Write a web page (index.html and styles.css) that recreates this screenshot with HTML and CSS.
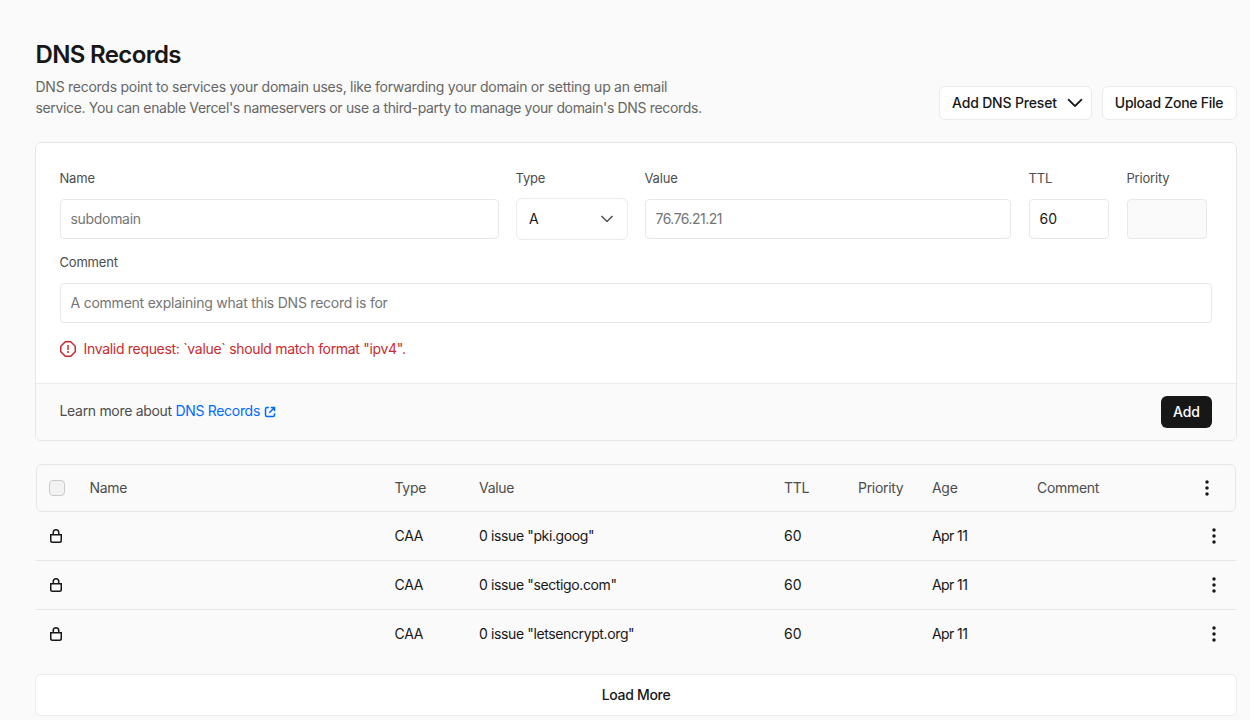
FILE: index.html
```
<!doctype html>
<html lang="en">

<head>
<meta charset="utf-8" />
<meta name="viewport" content="width=device-width, initial-scale=1" />
<title>DNS Records</title>
<link rel="stylesheet" href="styles.css">
</head>

<body>

<svg class="sprite" aria-hidden="true">
	<symbol id="chevron" viewBox="0 0 16 16">
		<path fill="currentColor" d="M14.06 5.5l-.53.53-4.82 4.82a1 1 0 0 1-1.42 0L2.47 6.03l-.53-.53L3 4.44l.53.53L8 9.44l4.47-4.47.53-.53z" />
	</symbol>
	<symbol id="lock" viewBox="0 0 16 16">
		<path fill="currentColor" fill-rule="evenodd" d="M10 6V4.5a2 2 0 0 0-4 0V6zM4.5 6V4.5a3.5 3.5 0 0 1 7 0V6H14v6.5a2.5 2.5 0 0 1-2.5 2.5h-7A2.5 2.5 0 0 1 2 12.5V6zm-1 1.5v5a1 1 0 0 0 1 1h7a1 1 0 0 0 1-1v-5z" />
	</symbol>
	<symbol id="dots" viewBox="0 0 16 16">
		<circle fill="currentColor" cx="8" cy="2" r="1.75" />
		<circle fill="currentColor" cx="8" cy="8" r="1.75" />
		<circle fill="currentColor" cx="8" cy="14" r="1.75" />
	</symbol>
</svg>

<main class="page">

<header class="head">
	<div>
		<h1>DNS Records</h1>
		<p class="intro"><span class="line">DNS records point to services your domain uses, like forwarding your domain or setting up an email</span> <span class="line line-tight">service. You can enable Vercel's nameservers or use a third-party to manage your domain's DNS records.</span></p>
	</div>
	<div class="actions">
		<button class="btn preset" type="button">Add DNS Preset <svg width="20" height="20"><use href="#chevron" /></svg></button>
		<button class="btn upload" type="button">Upload Zone File</button>
	</div>
</header>

<form class="card">
	<div class="card-body">
		<div class="fields">
			<label class="field"><span>Name</span><input type="text" placeholder="subdomain"></label>
			<div class="field"><span>Type</span><button class="select" type="button">A <svg width="16" height="16"><use href="#chevron" /></svg></button></div>
			<label class="field"><span>Value</span><input class="ip" type="text" placeholder="76.76.21.21"></label>
			<label class="field"><span>TTL</span><input class="num" type="text" value="60"></label>
			<label class="field"><span>Priority</span><input type="text" disabled></label>
		</div>
		<label class="field"><span>Comment</span><input class="comment" type="text" placeholder="A comment explaining what this DNS record is for"></label>
		<p class="error">
			<svg width="16" height="16" viewBox="0 0 16 16" fill="none" stroke="currentColor" stroke-width="1.5"><path d="M5.3.75h5.4l4.55 4.55v5.4l-4.55 4.55H5.3L.75 10.7V5.3z" /><path d="M8 4v5" /><circle cx="8" cy="11" r="1" fill="currentColor" stroke="none" /></svg>
			<span>Invalid request: `value` should match format "ipv4".</span>
		</p>
	</div>
	<div class="card-foot">
		<p>Learn more about <a href="#">DNS Records <svg width="12" height="12" viewBox="0 0 16 16" fill="none" stroke="currentColor" stroke-width="2"><path d="M6.5 2H4a2 2 0 0 0-2 2v8a2 2 0 0 0 2 2h8a2 2 0 0 0 2-2V9.5M9 2h5v5M14 2L7 9" /></svg></a></p>
		<button class="add" type="button">Add</button>
	</div>
</form>

<section class="records">
	<div class="row row-head">
		<span><input class="check" type="checkbox" disabled></span>
		<span>Name</span>
		<span>Type</span>
		<span>Value</span>
		<span>TTL</span>
		<span>Priority</span>
		<span>Age</span>
		<span>Comment</span>
		<svg class="dots" width="16" height="16"><use href="#dots" /></svg>
	</div>
	<div class="row">
		<svg class="lock" width="16" height="16"><use href="#lock" /></svg>
		<span></span>
		<span>CAA</span>
		<span class="value">0 issue "pki.goog"</span>
		<span class="num">60</span>
		<span></span>
		<span class="age">Apr 11</span>
		<span></span>
		<svg class="dots" width="16" height="16"><use href="#dots" /></svg>
	</div>
	<div class="row">
		<svg class="lock" width="16" height="16"><use href="#lock" /></svg>
		<span></span>
		<span>CAA</span>
		<span class="value">0 issue "sectigo.com"</span>
		<span class="num">60</span>
		<span></span>
		<span class="age">Apr 11</span>
		<span></span>
		<svg class="dots" width="16" height="16"><use href="#dots" /></svg>
	</div>
	<div class="row">
		<svg class="lock" width="16" height="16"><use href="#lock" /></svg>
		<span></span>
		<span>CAA</span>
		<span class="value">0 issue "letsencrypt.org"</span>
		<span class="num">60</span>
		<span></span>
		<span class="age">Apr 11</span>
		<span></span>
		<svg class="dots" width="16" height="16"><use href="#dots" /></svg>
	</div>
</section>

<button class="btn more" type="button">Load More</button>

</main>

</body>

</html>
```
FILE: styles.css
```
* {
	box-sizing: border-box;
	margin: 0;
	padding: 0;
}
html, body {
	height: 100%;
	overflow: hidden;
}
body {
	background: #fafafa;
	color: #171717;
	font: 14px/20px Inter, "Liberation Sans", sans-serif;
	letter-spacing: -.31px;
}
button, input {
	font: inherit;
	color: inherit;
	letter-spacing: inherit;
}
svg {
	flex: none;
}
.sprite {
	display: none;
}
.page {
	padding: 39px 13px 0 35px;
}

.head {
	display: flex;
	justify-content: space-between;
	align-items: flex-end;
	height: 81px;
}
.head > div:first-child {
	align-self: flex-start;
}
h1 {
	font-size: 24px;
	line-height: 32px;
	font-weight: 600;
	letter-spacing: -.65px;
	padding-left: .5px;
}
.intro {
	margin-top: 5px;
	padding-left: .5px;
	line-height: 21px;
	color: #666;
}
.line {
	display: block;
	white-space: nowrap;
	letter-spacing: -.262px;
}
.line-tight {
	letter-spacing: -.342px;
}
.actions {
	display: flex;
	gap: 10px;
}
.btn {
	display: flex;
	align-items: center;
	justify-content: center;
	height: 34px;
	border: 1px solid #ebebeb;
	border-radius: 6px;
	background: #fff;
	font-weight: 500;
	white-space: nowrap;
}
.preset {
	width: 153px;
	justify-content: space-between;
	padding: 0 6px 0 12px;
	letter-spacing: -.17px;
}
.upload {
	width: 135px;
	padding-right: 1px;
	letter-spacing: -.28px;
}

.card {
	margin-top: 22px;
	border: 1px solid #e6e6e6;
	border-radius: 6px;
	background: #fff;
	overflow: hidden;
}
.card-body {
	height: 240px;
	padding: 27px 24px 0;
}
.fields {
	display: grid;
	grid-template-columns: 439px 112px 366px 80px 80px;
	column-gap: 18px;
	margin-bottom: 15px;
}
.fields .field:nth-child(2) {
	margin: 0 -1px;
}
.fields .field:nth-child(n+3) {
	margin: 0 2px 0 -2px;
}
.field {
	display: block;
}
.field > span {
	display: block;
	font-size: 13px;
	line-height: 17px;
	margin: 0 0 12px -.5px;
	color: #4d4d4d;
	letter-spacing: -.2px;
}
.field input {
	display: block;
	width: 100%;
	height: 40px;
	padding: 0 9.5px 1px;
	border: 1px solid #e8e8e8;
	border-radius: 4px;
	background: #fff;
}
.field input::placeholder {
	color: #757575;
}
.field input:disabled {
	background: #fafafa;
}
.field .ip {
	letter-spacing: -.52px;
}
.field .comment {
	letter-spacing: -.23px;
}
.num {
	letter-spacing: .1px;
}
.select {
	display: flex;
	align-items: center;
	justify-content: space-between;
	width: 112px;
	height: 42px;
	margin: -1px 0;
	padding: 0 12px;
	border: 1px solid #ebebeb;
	border-radius: 6px;
	background: #fff;
}
.select svg {
	color: #4d4d4d;
}
.error {
	display: flex;
	align-items: center;
	gap: 7.5px;
	margin-top: 16px;
	color: #cb2a2f;
}
.card-foot {
	display: flex;
	align-items: center;
	justify-content: space-between;
	height: 57px;
	padding: 0 24px 0 23.5px;
	border-top: 1px solid #ebebeb;
	background: #fafafa;
	color: #4d4d4d;
}
.card-foot p {
	padding-bottom: 2px;
}
.card-foot a {
	color: #006bff;
	text-decoration: none;
}
.card-foot a svg {
	vertical-align: -2px;
}
.add {
	width: 51px;
	height: 32px;
	border: 0;
	border-radius: 6px;
	background: #171717;
	color: #fff;
	font-weight: 500;
	letter-spacing: -.1px;
}

.records {
	margin: 23px 1px 0;
}
.row {
	display: grid;
	grid-template-columns: 53.5px 305px 84.5px 305px 74px 74px 105px 169px 16px;
	align-items: center;
	height: 49px;
	border-bottom: 1px solid #e6e6e6;
	white-space: nowrap;
}
.row:last-child {
	border-bottom-color: transparent;
}
.row-head {
	grid-template-columns: 52.5px 305px 84.5px 305px 74px 74px 105px 162px 16px;
	height: 48px;
	border: 1px solid #e6e6e6;
	border-radius: 6px;
	color: #4d4d4d;
}
.value {
	letter-spacing: -.38px;
}
.age {
	letter-spacing: -.6px;
}
.dots {
	color: #171717;
}
.lock {
	margin-left: 12px;
}
.check {
	appearance: none;
	display: block;
	width: 16px;
	height: 16px;
	margin-left: 12px;
	border: 1px solid #c9c9c9;
	border-radius: 4px;
	background: #f2f2f2;
}
.more {
	width: 100%;
	height: 42px;
	margin-top: 15px;
}
```
